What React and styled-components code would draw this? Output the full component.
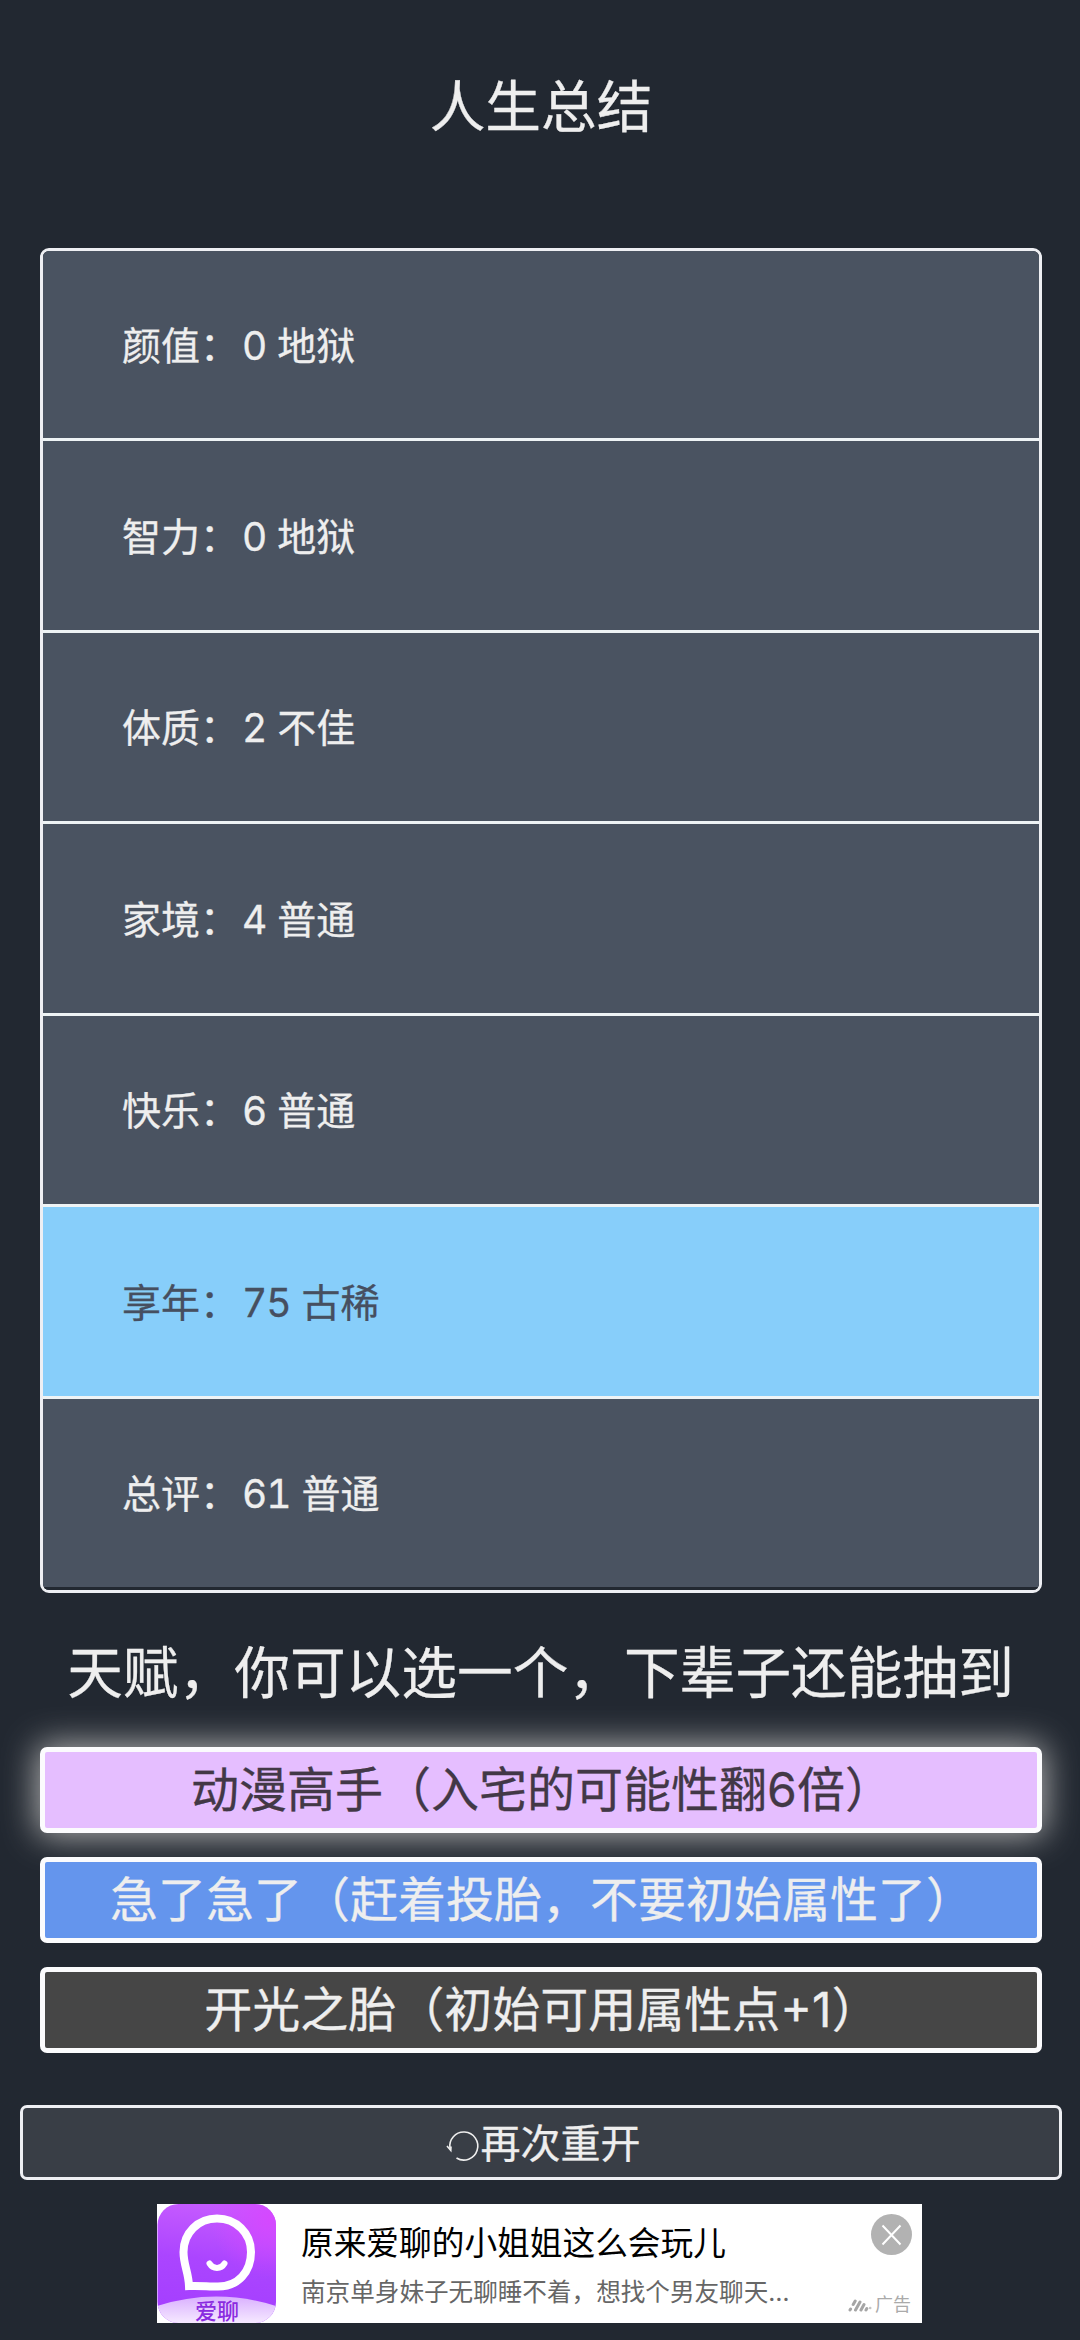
import React from "react";
import styled, { createGlobalStyle } from "styled-components";

const summary = [
  { label: "颜值", value: "0", judge: "地狱" },
  { label: "智力", value: "0", judge: "地狱" },
  { label: "体质", value: "2", judge: "不佳" },
  { label: "家境", value: "4", judge: "普通" },
  { label: "快乐", value: "6", judge: "普通" },
  { label: "享年", value: "75", judge: "古稀", grade: 1 },
  { label: "总评", value: "61", judge: "普通" },
];

const talents = [
  { text: "动漫高手（入宅的可能性翻6倍）", grade: 2, selected: true },
  { text: "急了急了（赶着投胎，不要初始属性了）", grade: 1 },
  { text: "开光之胎（初始可用属性点+1）", grade: 0 },
];

const talentColors = ["#464646", "#6495ed", "#e5beff"];

const App = () => {
  return (
    <>
      <GlobalStyle />
      <Page>
        <Title>人生总结</Title>
        <SummaryList>
          {summary.map((item) => (
            <SummaryRow key={item.label} $grade={item.grade}>
              <span>
                {item.label}：<Value>{item.value}</Value> {item.judge}
              </span>
            </SummaryRow>
          ))}
        </SummaryList>
        <Subtitle>天赋，你可以选一个，下辈子还能抽到</Subtitle>
        <TalentList>
          {talents.map((talent) => (
            <Talent
              key={talent.text}
              $grade={talent.grade}
              $selected={talent.selected}
            >
              {talent.text}
            </Talent>
          ))}
        </TalentList>
        <AgainButton>
          <RestartIcon />
          再次重开
        </AgainButton>
        <Ad>
          <AdLogo />
          <AdBody>
            <AdTitle>原来爱聊的小姐姐这么会玩儿</AdTitle>
            <AdText>南京单身妹子无聊睡不着，想找个男友聊天…</AdText>
          </AdBody>
          <AdSide>
            <CloseIcon />
            <AdTag>
              <AdMark />
              广告
            </AdTag>
          </AdSide>
        </Ad>
      </Page>
    </>
  );
};

const RestartIcon = () => (
  <svg width="35" height="40" viewBox="0 0 35 40" fill="none">
    <path
      d="M4 24.500A14 14 0 1 1 10.500 34"
      stroke="#eee"
      strokeWidth="1.600"
    />
    <path d="M1 22L4.800 26.500L5 22.500" stroke="#eee" strokeWidth="1.600" />
  </svg>
);

const AdLogo = () => (
  <svg width="119" height="119" viewBox="0 0 119 119">
    <defs>
      <linearGradient id="logoBg" x1="0.3" y1="0" x2="0.2" y2="1">
        <stop offset="0" stopColor="#c55aff" />
        <stop offset="0.45" stopColor="#ab45ff" />
        <stop offset="1" stopColor="#a33dff" />
      </linearGradient>
      <radialGradient id="logoGlow" cx="0.95" cy="0.12" r="0.5">
        <stop offset="0" stopColor="#d548ff" />
        <stop offset="1" stopColor="#d548ff" stopOpacity="0" />
      </radialGradient>
      <linearGradient id="logoFoot" x1="0" y1="0" x2="0" y2="1">
        <stop offset="0" stopColor="#d9b0ff" />
        <stop offset="1" stopColor="#f6e9ff" />
      </linearGradient>
      <clipPath id="logoClip">
        <rect x="0.500" width="118.500" height="119" rx="21" />
      </clipPath>
    </defs>
    <g clipPath="url(#logoClip)">
      <rect width="119" height="119" fill="url(#logoBg)" />
      <rect width="119" height="119" fill="url(#logoGlow)" />
      <path d="M0 102Q59 83 119 102V119H0Z" fill="url(#logoFoot)" />
    </g>
    <path
      d="M32 82C31.500 68 26.500 61 26.500 48C26.500 29 41 14.500 60 14.500C79 14.500 94 29 94 48C94 68 81 82.500 61 82.500C51 82.500 42 81.500 32 82Z"
      fill="none"
      stroke="#fff"
      strokeWidth="8"
    />
    <path
      d="M52.500 59.500C56 65.500 64 65.500 67.500 59.500"
      fill="none"
      stroke="#fff"
      strokeWidth="6"
      strokeLinecap="round"
    />
    <LogoText x="60" y="114.500" textAnchor="middle">
      爱聊
    </LogoText>
  </svg>
);

const CloseIcon = () => (
  <svg width="41" height="41" viewBox="0 0 41 41">
    <circle cx="20.500" cy="20.500" r="20.500" fill="#b2b2b2" />
    <path
      d="M11.500 11.500L29.500 30.500M29.500 11.500L11.500 30.500"
      stroke="#fff"
      strokeWidth="2"
    />
  </svg>
);

const AdMark = () => (
  <svg width="24" height="14" viewBox="0 0 24 14">
    <g stroke="#a5a5a5" strokeLinecap="round" strokeWidth="3">
      <path d="M2 12L2.600 11M5.200 6.500L7.200 3" />
      <path d="M7.500 12L12 4M13 12L16 6.500" />
      <path d="M18 12L18.800 10.600" />
    </g>
    <circle cx="22.200" cy="10" r="1.300" fill="#c4c4c4" />
  </svg>
);

const GlobalStyle = createGlobalStyle`
  body {
    margin: 0;
    background: #222831;
  }
`;

const Page = styled.main`
  box-sizing: border-box;
  display: flex;
  flex-direction: column;
  width: 1080px;
  height: 2340px;
  overflow: hidden;
  background: #222831;
  color: #eeeeee;
  font-family: Inter, "Noto Sans CJK SC", sans-serif;
  -webkit-text-stroke: 0.3px currentColor;
`;

const Title = styled.h1`
  margin: 65px 0 0;
  padding-left: 2px;
  font-size: 55.7px;
  font-weight: 400;
  line-height: 84px;
  text-align: center;
`;

const SummaryList = styled.ul`
  box-sizing: border-box;
  display: flex;
  flex-direction: column;
  height: 1345px;
  margin: 99px 38px 0 40px;
  padding: 0;
  border: 3px solid #eeeff3;
  border-radius: 9px;
  list-style: none;
  overflow: hidden;
`;

const SummaryRow = styled.li`
  box-sizing: border-box;
  display: flex;
  flex: 1;
  align-items: center;
  padding: 3px 0 0 79px;
  border-bottom: 3px solid #eef3f5;
  background: ${(props) => (props.$grade ? "#87cefa" : "#4a5361")};
  color: ${(props) => (props.$grade ? "#464f60" : "#eeeeee")};
  font-size: 39px;
  line-height: 58px;
  white-space: nowrap;

  &:first-child {
    flex: 0 0 190px;
  }

  &:last-child {
    border-bottom-color: #222831;
  }
`;

const Value = styled.span`
  margin-left: 3px;
  font-variant-numeric: tabular-nums;
  letter-spacing: -1px;
`;

const Subtitle = styled.h2`
  margin: 38px 0 0;
  padding-left: 1px;
  font-size: 55.7px;
  font-weight: 400;
  line-height: 84px;
  text-align: center;
  white-space: nowrap;
`;

const TalentList = styled.ul`
  display: flex;
  flex-direction: column;
  gap: 24px;
  margin: 32px 38px 0 40px;
  padding: 0;
  list-style: none;
`;

const Talent = styled.li`
  box-sizing: border-box;
  height: 86px;
  padding-left: 2px;
  border: 5px solid #fbfbfd;
  border-radius: 7px;
  background: ${(props) => talentColors[props.$grade]};
  box-shadow: ${(props) => (props.$selected ? "0 0 34px 3px #b0b0b0" : "none")};
  color: ${(props) => (props.$selected ? "#423846" : "#eeeeee")};
  font-size: 48px;
  line-height: 76px;
  text-align: center;
  white-space: nowrap;
`;

const AgainButton = styled.button`
  box-sizing: border-box;
  display: flex;
  align-items: center;
  justify-content: center;
  height: 75px;
  margin: 52px 18px 0 20px;
  padding: 2px 0 0 4px;
  border: 3px solid #eeeff3;
  border-radius: 7px;
  background: #393e46;
  color: #eeeeee;
  font-family: inherit;
  font-size: 40px;
  line-height: 60px;
`;

const Ad = styled.section`
  display: flex;
  width: 765px;
  height: 119px;
  margin: 24px 0 0 157px;
  background: #fff;
  -webkit-text-stroke: 0;
`;

const AdBody = styled.div`
  flex: 1;
  padding: 15px 0 0 25px;
  white-space: nowrap;
`;

const AdTitle = styled.div`
  color: #000;
  font-size: 32.7px;
  line-height: 48px;
`;

const AdText = styled.div`
  margin-top: 7px;
  color: #666;
  font-size: 24.6px;
  line-height: 36px;
`;

const AdSide = styled.div`
  display: flex;
  flex-direction: column;
  align-items: flex-end;
  justify-content: space-between;
  padding: 10px 10px 5px 0;
`;

const AdTag = styled.div`
  display: flex;
  align-items: center;
  gap: 3px;
  margin-right: 1px;
  color: #aaa;
  font-size: 18px;
  line-height: 26px;
`;

const LogoText = styled.text`
  fill: #8a2be0;
  font-size: 22px;
  font-weight: 500;
`;

export default App;
